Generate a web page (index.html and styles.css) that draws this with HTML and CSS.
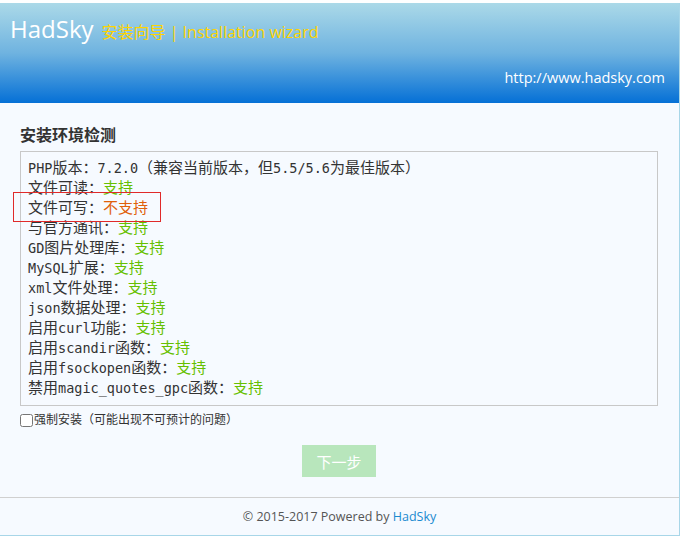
FILE: index.html
```html
<!DOCTYPE html>
<html lang="zh-CN">
<head>
    <meta charset="UTF-8">
    <title>HadSky 安装向导</title>
    <link rel="stylesheet" href="styles.css">
</head>
<body>
    <div class="wrap">
        <div class="header">
            <div class="brand">
                <span class="logo">HadSky</span>
                <span class="subtitle">安装向导 | Installation wizard</span>
            </div>
            <div class="site-url">http://www.hadsky.com</div>
        </div>

        <div class="main">
            <h2>安装环境检测</h2>
            <div class="env-box">
                <div class="row"><span class="en">PHP</span>版本：<span class="en">7.2.0</span>（兼容当前版本，但<span class="en">5.5/5.6</span>为最佳版本）</div>
                <div class="row">文件可读：<span class="ok">支持</span></div>
                <div class="row">文件可写：<span class="bad">不支持</span></div>
                <div class="row">与官方通讯：<span class="ok">支持</span></div>
                <div class="row"><span class="en">GD</span>图片处理库：<span class="ok">支持</span></div>
                <div class="row"><span class="en">MySQL</span>扩展：<span class="ok">支持</span></div>
                <div class="row"><span class="en">xml</span>文件处理：<span class="ok">支持</span></div>
                <div class="row"><span class="en">json</span>数据处理：<span class="ok">支持</span></div>
                <div class="row">启用<span class="en">curl</span>功能：<span class="ok">支持</span></div>
                <div class="row">启用<span class="en">scandir</span>函数：<span class="ok">支持</span></div>
                <div class="row">启用<span class="en">fsockopen</span>函数：<span class="ok">支持</span></div>
                <div class="row">禁用<span class="en">magic_quotes_gpc</span>函数：<span class="ok">支持</span></div>
                <div class="mark"></div>
            </div>
            <label class="force"><input type="checkbox">强制安装（可能出现不可预计的问题）</label>
            <div class="actions">
                <button class="next-btn" disabled>下一步</button>
            </div>
        </div>

        <div class="footer">© 2015-2017 Powered by <a href="#">HadSky</a></div>
    </div>
</body>
</html>
```

FILE: styles.css
```css
body {
    margin: 0;
    font-family: "Open Sans", "Noto Sans CJK SC", sans-serif;
    background-color: #fff;
    color: #333;
}
.wrap {
    width: 679px;
    margin-top: 3px;
    background-color: #f6faff;
    border-right: 1px solid #a8d6e8;
    border-bottom: 1px solid #a8d6e8;
}
.header {
    height: 100px;
    box-sizing: border-box;
    padding: 9px 14px 0 10px;
    background: linear-gradient(to bottom, #abd9e8 0%, #6fb3e0 50%, #0570d6 100%);
}
.brand {
    display: flex;
    align-items: baseline;
    gap: 8px;
    height: 36px;
}
.logo {
    font-size: 24px;
    color: #fff;
}
.subtitle {
    font-size: 16px;
    color: #ffd400;
}
.site-url {
    margin-top: 20px;
    text-align: right;
    font-size: 14.5px;
    color: #fff;
}
.main {
    padding: 21px 21px 20px 20px;
}
h2 {
    margin: 0 0 5px 0;
    font-size: 16px;
    line-height: 22px;
    font-weight: bold;
    color: #333;
}
.env-box {
    position: relative;
    border: 1px solid #c8c8c8;
    padding: 5px 7px 8px 7px;
    font-family: "Noto Sans CJK SC", sans-serif;
    font-size: 15px;
    line-height: 20px;
    color: #333;
}
.row {
    height: 20px;
    white-space: nowrap;
}
.en {
    font-family: "DejaVu Sans Mono", monospace;
    font-size: 13.5px;
}
.ok {
    color: #66c000;
}
.bad {
    color: #e0600a;
}
.mark {
    position: absolute;
    left: -8px;
    top: 40px;
    width: 146px;
    height: 28px;
    border: 1px solid #e02a2a;
}
.force {
    display: flex;
    align-items: center;
    margin-top: 4px;
    font-size: 12px;
    line-height: 20px;
    color: #333;
}
.force input {
    width: 13px;
    height: 13px;
    margin: 0 1px 0 0;
}
.actions {
    margin-top: 15px;
    text-align: center;
}
.next-btn {
    width: 74px;
    height: 32px;
    border: none;
    background-color: #b8e6bc;
    color: #fff;
    font-family: "Open Sans", "Noto Sans CJK SC", sans-serif;
    font-size: 15px;
}
.footer {
    border-top: 1px solid #d0d0d0;
    height: 37px;
    line-height: 37px;
    text-align: center;
    font-size: 12.5px;
    color: #555;
}
.footer a {
    color: #1a8ad0;
    text-decoration: none;
}
```
